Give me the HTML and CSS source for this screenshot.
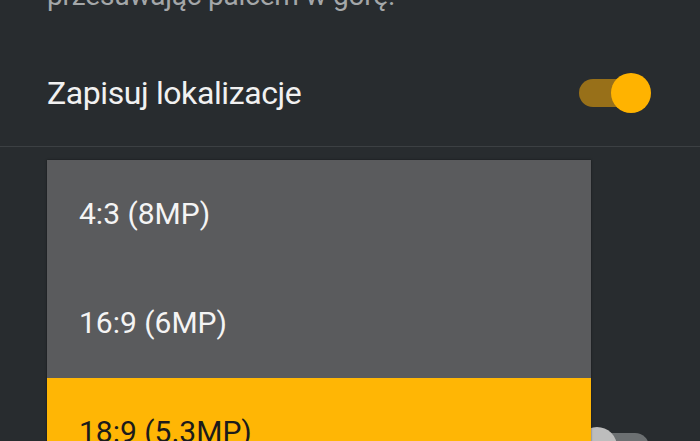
FILE: index.html
```html
<!DOCTYPE html>
<html lang="pl">
<head>
<meta charset="utf-8">
<title>Ustawienia aparatu</title>
<link rel="stylesheet" href="styles.css">
</head>
<body>
<div class="screen">
  <div class="pref-summary">przesuwając palcem w górę.</div>
  <div class="pref-row">
    <div class="pref-title">Zapisuj lokalizacje</div>
    <div class="switch switch-on"><span class="track"></span><span class="knob"></span></div>
  </div>
  <div class="divider"></div>
  <div class="pref-row pref-row-lower">
    <div class="pref-title"></div>
    <div class="switch switch-off"><span class="track"></span><span class="knob"></span></div>
  </div>

  <ul class="popup-menu">
    <li class="menu-item">4:3 (8MP)</li>
    <li class="menu-item">16:9 (6MP)</li>
    <li class="menu-item menu-item-selected">18:9 (5.3MP)</li>
  </ul>
</div>
</body>
</html>
```

FILE: styles.css
```css
html, body {
  margin: 0;
  padding: 0;
  background: #282c2f;
}

body {
  font-family: Roboto, "Noto Sans", sans-serif;
  overflow: hidden;
  width: 700px;
  height: 441px;
}

.screen {
  position: relative;
  width: 700px;
  height: 441px;
  overflow: hidden;
}

.pref-summary {
  margin-top: -20px;
  padding-left: 47px;
  font-size: 28px;
  line-height: 32px;
  letter-spacing: -0.2px;
  color: #a4a7a9;
}

.pref-row {
  display: flex;
  align-items: center;
  justify-content: space-between;
  height: 106px;
  margin-top: 28px;
  padding: 0 49px 0 47px;
}

.pref-title {
  font-size: 32px;
  line-height: 40px;
  letter-spacing: -0.4px;
  color: #f1f1f1;
}

.divider {
  height: 1px;
  background: #3c4043;
}

.pref-row-lower {
  margin-top: 229px;
  height: 142px;
}

.switch {
  position: relative;
  width: 74px;
  height: 40px;
  flex: none;
}

.switch .track {
  position: absolute;
  left: 2px;
  right: 2px;
  top: 6px;
  height: 28px;
  border-radius: 14px;
}

.switch .knob {
  position: absolute;
  top: 0;
  width: 40px;
  height: 40px;
  border-radius: 50%;
}

.switch-on .track {
  background: #987019;
}

.switch-on .knob {
  right: 0;
  background: #ffb300;
}

.switch-off .track {
  background: #6c7072;
}

.switch-off .knob {
  left: 0;
  background: #bdbdbd;
}

.popup-menu {
  position: absolute;
  left: 47px;
  top: 160px;
  width: 544px;
  margin: 0;
  padding: 0;
  list-style: none;
  background: #5a5b5d;
  box-shadow: 0 0 2px rgba(0, 0, 0, 0.5);
}

.menu-item {
  box-sizing: border-box;
  height: 109px;
  padding: 36px 32px 0 32px;
  font-size: 30px;
  line-height: 36px;
  color: #f4f4f4;
}

.menu-item-selected {
  background: #ffb605;
  color: #1b1b1b;
}
```
